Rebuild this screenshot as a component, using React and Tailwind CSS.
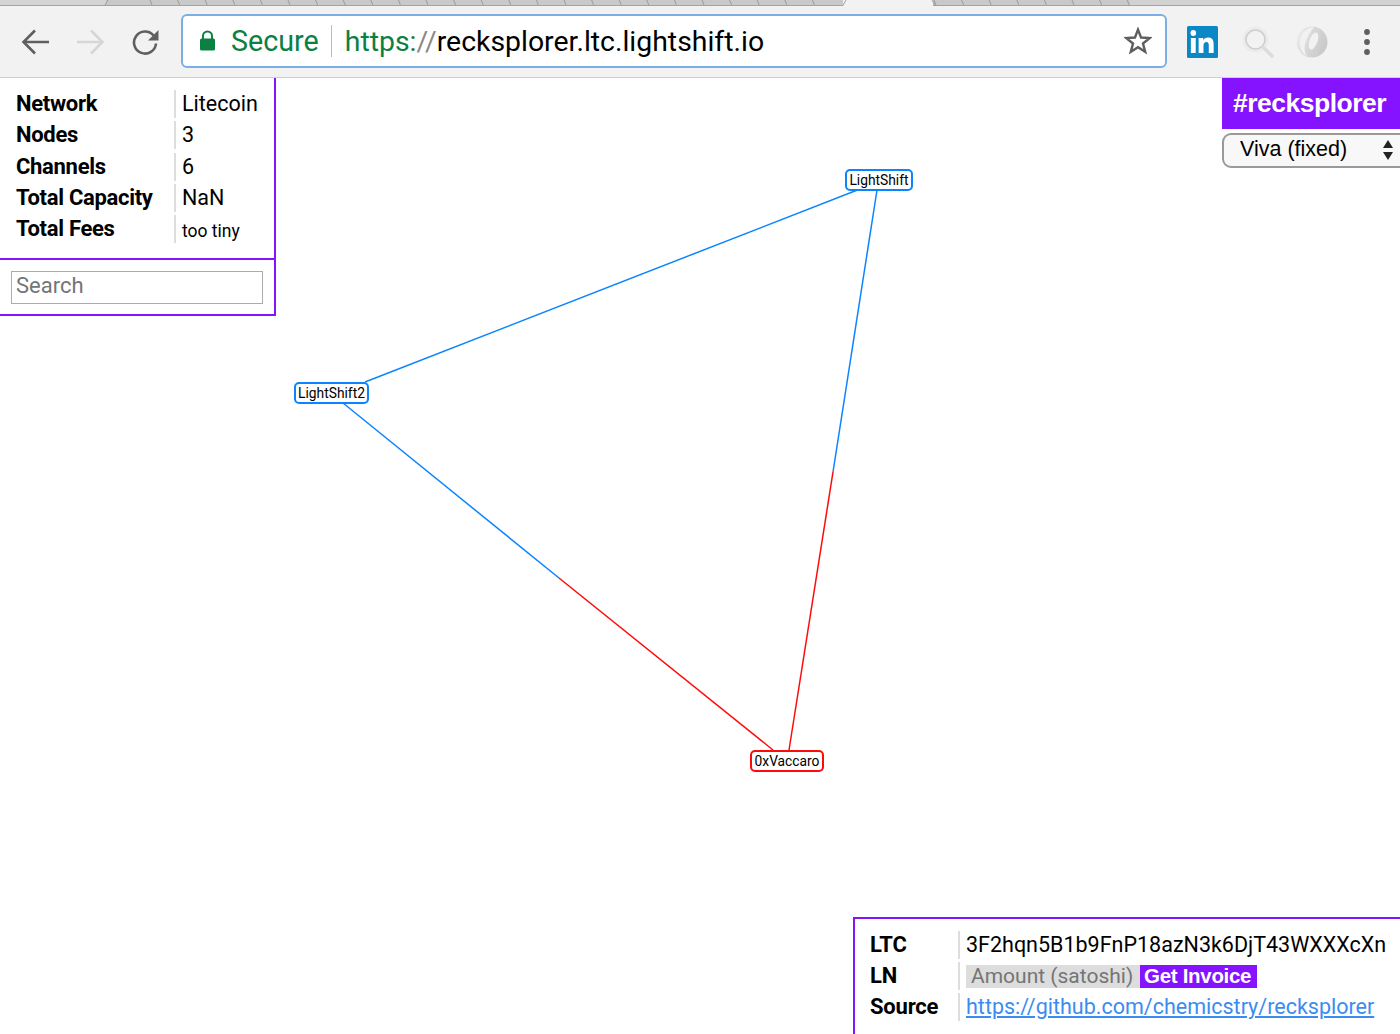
import React from 'react'

const stats = [
  ['Network', 'Litecoin'],
  ['Nodes', '3'],
  ['Channels', '6'],
  ['Total Capacity', 'NaN'],
  ['Total Fees', 'too tiny'],
]

function TabStrip() {
  const ticks = []
  for (let x = 150; x < 840; x += 27.6) ticks.push(x)
  for (let x = 934; x < 1130; x += 27.6) ticks.push(x)
  return (
    <div className="h-[6px] bg-[#c9c9c9]">
      <svg width="1400" height="6" className="block">
        <rect x="0" y="0" width="106" height="6" fill="#d4d4d4" />
        <rect x="1130" y="0" width="270" height="6" fill="#d2d2d2" />
        {ticks.map((x) => (
          <line key={x} x1={x} y1="0" x2={x + 2} y2="5" stroke="#8f8f8f" strokeWidth="0.8" />
        ))}
        <line x1="108" y1="0" x2="105" y2="5" stroke="#8f8f8f" strokeWidth="0.8" />
        <line x1="0" y1="5.5" x2="843" y2="5.5" stroke="#a3a3a3" />
        <line x1="932" y1="5.5" x2="1400" y2="5.5" stroke="#a3a3a3" />
        <rect x="843" y="0" width="90" height="6" fill="#f2f2f2" />
        <line x1="846" y1="0" x2="843" y2="5.5" stroke="#8f8f8f" strokeWidth="0.8" />
        <line x1="932" y1="0" x2="935" y2="5.5" stroke="#8f8f8f" strokeWidth="0.8" />
      </svg>
    </div>
  )
}

function Toolbar() {
  return (
    <div className="h-[72px] bg-[#f2f2f2] border-b border-[#cfcfcf] flex items-center font-['Roboto',sans-serif]">
      <svg width="28" height="26" viewBox="0 0 28 26" fill="none" stroke="#5f5f5f" strokeWidth="2.6" className="ml-[21px]">
        <path d="M28 13H3M14 1.500L2.500 13 14 24.500" />
      </svg>
      <svg width="28" height="26" viewBox="0 0 28 26" fill="none" stroke="#d6d6d6" strokeWidth="2.6" className="ml-[28px]">
        <path d="M0 13h25M14 1.500L25.500 13 14 24.500" />
      </svg>
      <svg width="27" height="26" viewBox="0 0 27 26" fill="none" className="ml-[27px]">
        <path d="M21.500 6.500A11 11 0 1 0 24 14.500" stroke="#5f5f5f" strokeWidth="2.6" />
        <path d="M26.500 1v10.500H16z" fill="#5f5f5f" />
      </svg>
      <div className="ml-[22px] mb-[2px] w-[986px] h-[54px] bg-white border-2 border-[#7aaee6] rounded-[6px] flex items-center pl-[16px] pr-[13px]">
        <svg width="17" height="21" viewBox="0 0 17 21" className="shrink-0">
          <path d="M4 9V6a4.500 4.500 0 0 1 9 0v3" fill="none" stroke="#0b8043" strokeWidth="2" />
          <rect x="1" y="8.500" width="15" height="12" rx="1.500" fill="#0b8043" />
        </svg>
        <span className="ml-[15px] pt-[3px] text-[28.7px] text-[#0b8043]">Secure</span>
        <span className="ml-[12px] w-[1.5px] h-[32px] bg-[#bdbdbd]" />
        <span className="ml-[12.5px] pt-[3px] text-[28.4px] whitespace-nowrap">
          <span className="text-[#0b8043]">https:</span>
          <span className="text-[#8a8a8a]">//</span>
          <span className="text-black">recksplorer.ltc.lightshift.io</span>
        </span>
        <svg width="28" height="28" viewBox="-2 -2 32 32" fill="none" stroke="#5f5f5f" strokeWidth="2.8" className="ml-auto">
          <path d="M14 1l3.500 9.100 9.800.6-7.600 6.200 2.500 9.400L14 21l-8.200 5.300 2.500-9.400L.7 10.700l9.800-.6z" />
        </svg>
      </div>
      <svg width="31" height="32" viewBox="0 0 32 32" preserveAspectRatio="none" className="ml-[20px]">
        <rect width="32" height="32" rx="1.500" fill="#0a87c4" />
        <circle cx="6.500" cy="7" r="2.900" fill="#fff" />
        <rect x="4" y="12" width="5" height="15" fill="#fff" />
        <path d="M12 12h4.800v2.200c.9-1.500 2.600-2.600 5-2.600 4.200 0 5.700 2.700 5.700 6.800V27h-5v-7.600c0-2-.5-3.400-2.400-3.400-1.900 0-3.100 1.300-3.100 3.500V27h-5z" fill="#fff" />
      </svg>
      <svg width="32" height="32" viewBox="0 0 32 32" className="ml-[24px]">
        <circle cx="13.500" cy="13.500" r="11" fill="none" stroke="#ebebeb" strokeWidth="4" />
        <circle cx="13.500" cy="13.500" r="9.500" fill="none" stroke="#cdcdcd" strokeWidth="1.600" />
        <line x1="22" y1="22" x2="30" y2="30" stroke="#dcdcdc" strokeWidth="3.500" strokeLinecap="round" />
      </svg>
      <svg width="32" height="32" viewBox="0 0 32 32" className="ml-[22px]">
        <defs>
          <linearGradient id="swirl" x1="0" y1="0.2" x2="1" y2="0.6">
            <stop offset="0" stopColor="#eeeeee" />
            <stop offset="0.45" stopColor="#d8d8d8" />
            <stop offset="1" stopColor="#c8c8c8" />
          </linearGradient>
        </defs>
        <circle cx="16" cy="16" r="15.500" fill="url(#swirl)" />
        <ellipse cx="17.500" cy="15" rx="4" ry="9" transform="rotate(20 17.500 15)" fill="#f2f2f2" />
        <path d="M18 .8C9 2 3 9 4 19c.5 5 3 9 7 11-3-4-3-10-1-15 1.800-5 5-10 8-14.200z" fill="#f1f1f1" />
      </svg>
      <svg width="8" height="28" viewBox="0 0 8 28" className="ml-[35px]">
        <circle cx="4" cy="4" r="2.900" fill="#5f5f5f" />
        <circle cx="4" cy="14" r="2.900" fill="#5f5f5f" />
        <circle cx="4" cy="24" r="2.900" fill="#5f5f5f" />
      </svg>
    </div>
  )
}

function Graph() {
  return (
    <svg width="1400" height="956" className="absolute inset-0">
      <line x1="860" y1="111" x2="365" y2="304" stroke="#0a84ff" strokeWidth="1.500" />
      <line x1="877" y1="112" x2="833" y2="394" stroke="#0a84ff" strokeWidth="1.500" />
      <line x1="833" y1="394" x2="789" y2="672" stroke="#ff0a0a" strokeWidth="1.500" />
      <line x1="343" y1="325" x2="559" y2="500" stroke="#0a84ff" strokeWidth="1.500" />
      <line x1="559" y1="500" x2="773" y2="672" stroke="#ff0a0a" strokeWidth="1.500" />
    </svg>
  )
}

function Node({ label, className }) {
  return (
    <div className={`absolute h-[22px] border-2 rounded-[5px] bg-white flex items-center justify-center pt-[1px] text-[13.8px] text-black font-['Roboto',sans-serif] leading-none ${className}`}>
      {label}
    </div>
  )
}

function StatsPanel() {
  return (
    <div className="absolute left-0 top-0 w-[276px] bg-white border-r-2 border-b-2 border-[#8613ff] font-['Roboto',sans-serif]">
      <div className="h-[182px] border-b-2 border-[#8613ff] pt-[12px] pl-[16px]">
        {stats.map(([name, value]) => (
          <div key={name} className="flex h-[31.25px] text-[21.5px] text-black">
            <div className="w-[158px] text-[22px] font-bold leading-[28px] tracking-[-0.3px] whitespace-nowrap">{name}</div>
            <div className={`h-[28px] border-l-2 border-[#dddddd] pl-[6px] leading-[28px] whitespace-nowrap ${name === 'Total Fees' ? 'text-[17.5px] pt-[2px]' : ''}`}>
              {value}
            </div>
          </div>
        ))}
      </div>
      <div className="h-[54px] pt-[11px] pl-[11px]">
        <input
          placeholder="Search"
          className="w-[252px] h-[33px] border border-[#ababab] bg-white px-[4px] pb-[4px] text-[22px] placeholder:text-[#757575] outline-none"
        />
      </div>
    </div>
  )
}

function BrandPanel() {
  return (
    <div className="absolute right-0 top-0 w-[178px] font-['Liberation_Sans',sans-serif]">
      <div className="h-[51px] bg-[#8613ff] text-white font-bold text-[26.5px] leading-[51px] pl-[11px] tracking-[-0.5px] whitespace-nowrap">
        #recksplorer
      </div>
      <div className="mt-[4px] w-[190px] h-[35px] bg-[#f8f8f8] border-2 border-[#9a9a9a] rounded-[9px] relative text-[21.5px] leading-[29px] pl-[16px] text-black">
        Viva (fixed)
        <svg width="12" height="22" viewBox="0 0 12 22" className="absolute left-[158px] top-[4px]">
          <path d="M6 1l5 8H1zM6 21l5-8H1z" fill="#222" />
        </svg>
      </div>
    </div>
  )
}

function InfoPanel() {
  return (
    <div className="absolute left-[853px] top-[839px] w-[547px] h-[117px] bg-white border-l-2 border-t-2 border-[#8613ff] pt-[12px] pl-[15px] font-['Roboto',sans-serif] text-[21.5px] text-black">
      <div className="flex h-[31px]">
        <div className="w-[88px] text-[22px] font-bold leading-[28px] tracking-[-0.2px]">LTC</div>
        <div className="h-[28px] border-l-2 border-[#dddddd] pl-[6px] leading-[28px] whitespace-nowrap">3F2hqn5B1b9FnP18azN3k6DjT43WXXXcXn</div>
      </div>
      <div className="flex h-[31px]">
        <div className="w-[88px] text-[22px] font-bold leading-[28px] tracking-[-0.2px]">LN</div>
        <div className="h-[28px] border-l-2 border-[#dddddd] pl-[6px] flex items-center whitespace-nowrap">
          <div className="w-[174px] h-[23px] bg-[#dddddd] text-[#757575] text-[21px] pl-[5px] leading-[22px]">Amount (satoshi)</div>
          <div className="w-[117px] h-[23px] bg-[#8613ff] text-white pl-[4px] leading-[22px] font-['Liberation_Sans',sans-serif] text-[20.5px] font-bold tracking-[-0.3px]">Get Invoice</div>
        </div>
      </div>
      <div className="flex h-[31px]">
        <div className="w-[88px] text-[22px] font-bold leading-[28px] tracking-[-0.2px]">Source</div>
        <div className="h-[28px] border-l-2 border-[#dddddd] pl-[6px] leading-[28px] whitespace-nowrap">
          <a href="#" className="text-[#3b8cf0] underline">https://github.com/chemicstry/recksplorer</a>
        </div>
      </div>
    </div>
  )
}

export default function App() {
  return (
    <div className="w-[1400px] h-[1034px] overflow-hidden bg-white">
      <TabStrip />
      <Toolbar />
      <div className="relative h-[956px] overflow-hidden">
        <Graph />
        <Node label="LightShift" className="left-[845px] top-[91px] w-[68px] border-[#0a84ff]" />
        <Node label="LightShift2" className="left-[294px] top-[304px] w-[75px] border-[#0a84ff]" />
        <Node label="0xVaccaro" className="left-[750px] top-[672px] w-[74px] border-[#ff0a0a]" />
        <StatsPanel />
        <BrandPanel />
        <InfoPanel />
      </div>
    </div>
  )
}
